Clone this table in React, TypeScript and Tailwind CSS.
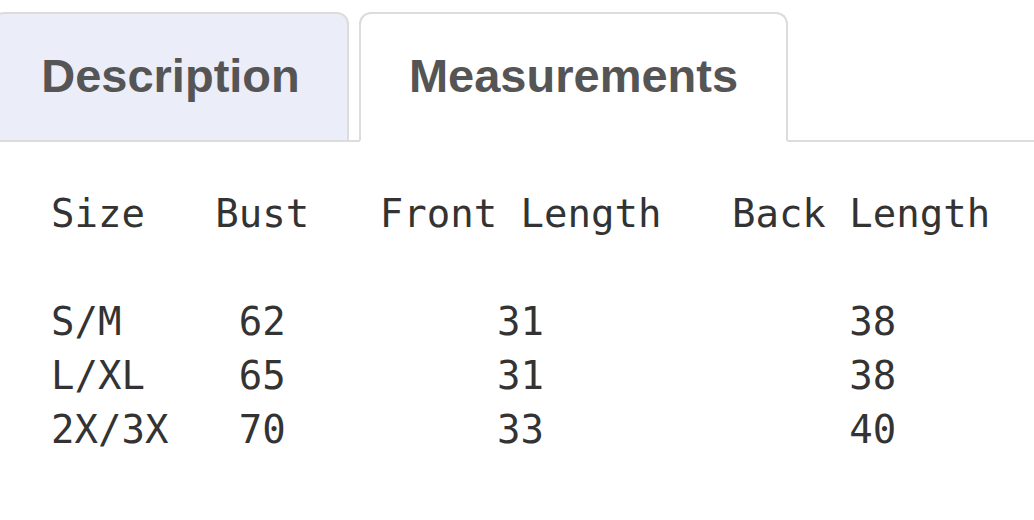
const rows = [
  "Size   Bust   Front Length   Back Length",
  "",
  "S/M     62         31             38",
  "L/XL    65         31             38",
  "2X/3X   70         33             40",
];

export default function App() {
  return (
    <div className="w-[1034px] h-[520px] bg-white overflow-hidden">
      {/* Tabs */}
      <div className="flex items-end gap-[10px] pt-[12px] border-b-2 border-[#dcdcdc] ml-[-8px]">
        <div className="w-[357px] h-[130px] -mb-[2px] flex items-center justify-center bg-[#ebedf8] border-2 border-[#dcdcdc] rounded-t-[12px]">
          <span className="font-['Liberation_Sans',Arial,sans-serif] font-bold text-[47px] text-[#555555] pb-[2px]">
            Description
          </span>
        </div>
        <div className="w-[429px] h-[130px] -mb-[2px] flex items-center justify-center bg-white border-2 border-b-white border-[#dcdcdc] rounded-t-[12px]">
          <span className="font-['Liberation_Sans',Arial,sans-serif] font-bold text-[47px] text-[#555555] pb-[2px]">
            Measurements
          </span>
        </div>
      </div>

      {/* Measurements table */}
      <pre className="pl-[51px] pt-[45px] font-['DejaVu_Sans_Mono',monospace] text-[39px] leading-[54px] text-[#333333]">
        {rows.join("\n")}
      </pre>
    </div>
  );
}
